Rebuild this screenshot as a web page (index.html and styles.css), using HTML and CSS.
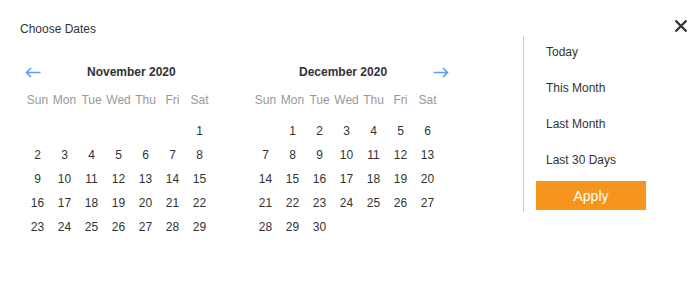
FILE: index.html
```html
<!DOCTYPE html>
<html lang="en">
<head>
    <meta charset="UTF-8">
    <title>Choose Dates</title>
    <link rel="stylesheet" href="styles.css">
</head>
<body>
    <div class="picker">
        <div class="picker-head">
            <span class="picker-title">Choose Dates</span>
            <span class="close-btn">
                <svg width="14" height="14" viewBox="0 0 14 14"><path d="M1.5 1.5 L12.5 12.5 M12.5 1.5 L1.5 12.5" stroke="#333" stroke-width="2.4" fill="none"/></svg>
            </span>
        </div>

        <div class="picker-body">
            <div class="month">
                <div class="month-nav">
                    <span class="nav-arrow">
                        <svg width="16" height="11" viewBox="0 0 16 11"><path d="M15.5 5.5 H1.5 M6 1 L1.5 5.5 L6 10" stroke="#5a9ff0" stroke-width="1.6" fill="none"/></svg>
                    </span>
                    <span class="month-title left">November 2020</span>
                </div>
                <div class="weekdays">
                    <span>Sun</span><span>Mon</span><span>Tue</span><span>Wed</span><span>Thu</span><span>Fri</span><span>Sat</span>
                </div>
                <div class="days">
                    <span></span><span></span><span></span><span></span><span></span><span></span><span>1</span>
                    <span>2</span><span>3</span><span>4</span><span>5</span><span>6</span><span>7</span><span>8</span>
                    <span>9</span><span>10</span><span>11</span><span>12</span><span>13</span><span>14</span><span>15</span>
                    <span>16</span><span>17</span><span>18</span><span>19</span><span>20</span><span>21</span><span>22</span>
                    <span>23</span><span>24</span><span>25</span><span>26</span><span>27</span><span>28</span><span>29</span>
                </div>
            </div>

            <div class="month">
                <div class="month-nav">
                    <span class="month-title right">December 2020</span>
                    <span class="nav-arrow next">
                        <svg width="16" height="11" viewBox="0 0 16 11"><path d="M0.5 5.5 H14.5 M10 1 L14.5 5.5 L10 10" stroke="#5a9ff0" stroke-width="1.6" fill="none"/></svg>
                    </span>
                </div>
                <div class="weekdays">
                    <span>Sun</span><span>Mon</span><span>Tue</span><span>Wed</span><span>Thu</span><span>Fri</span><span>Sat</span>
                </div>
                <div class="days">
                    <span></span><span>1</span><span>2</span><span>3</span><span>4</span><span>5</span><span>6</span>
                    <span>7</span><span>8</span><span>9</span><span>10</span><span>11</span><span>12</span><span>13</span>
                    <span>14</span><span>15</span><span>16</span><span>17</span><span>18</span><span>19</span><span>20</span>
                    <span>21</span><span>22</span><span>23</span><span>24</span><span>25</span><span>26</span><span>27</span>
                    <span>28</span><span>29</span><span>30</span>
                </div>
            </div>

            <div class="ranges">
                <div class="range">Today</div>
                <div class="range">This Month</div>
                <div class="range">Last Month</div>
                <div class="range last">Last 30 Days</div>
                <button class="apply-btn">Apply</button>
            </div>
        </div>
    </div>
</body>
</html>
```

FILE: styles.css
```css
body {
    margin: 0;
    font-family: "Liberation Sans", Arial, sans-serif;
    font-size: 12px;
    color: #333;
    background: #fff;
}
.picker {
    width: 700px;
    height: 300px;
}
.picker-head {
    display: flex;
    justify-content: space-between;
    align-items: flex-start;
    height: 16px;
    padding: 20px 12px 0 20px;
}
.picker-title {
    line-height: 16px;
    margin-top: 1px;
}
.close-btn {
    display: block;
    width: 14px;
    height: 14px;
    margin-top: -1px;
}
.close-btn svg {
    display: block;
}
.picker-body {
    display: flex;
    align-items: flex-start;
    padding-left: 24px;
}
.month {
    width: 189px;
    padding-top: 28px;
}
.month + .month {
    margin-left: 39px;
}
.month-nav {
    display: flex;
    align-items: center;
    height: 16px;
}
.nav-arrow {
    display: block;
    width: 16px;
    height: 11px;
    margin-left: 1px;
}
.nav-arrow svg {
    display: block;
}
.nav-arrow.next {
    margin-left: auto;
    margin-right: -8px;
}
.month-title {
    font-weight: bold;
    line-height: 16px;
}
.month-title.left {
    margin-left: 46px;
}
.month-title.right {
    margin-left: 47px;
}
.weekdays, .days {
    display: grid;
    grid-template-columns: repeat(7, 27px);
    text-align: center;
}
.weekdays {
    margin-top: 12px;
    line-height: 16px;
    color: #999;
}
.days {
    margin-top: 11px;
    grid-auto-rows: 24px;
    line-height: 24px;
}
.ranges {
    margin-left: 82px;
    border-left: 1px solid #ccc;
    padding: 9px 0 2px 12px;
    width: 130px;
}
.range {
    line-height: 14px;
    margin-bottom: 22px;
    padding-left: 10px;
}
.range.last {
    margin-bottom: 14px;
}
.apply-btn {
    display: block;
    width: 110px;
    height: 29px;
    border: none;
    background-color: #f7941d;
    color: #fff;
    font-family: "Liberation Sans", Arial, sans-serif;
    font-size: 14px;
    padding: 0;
}
```
